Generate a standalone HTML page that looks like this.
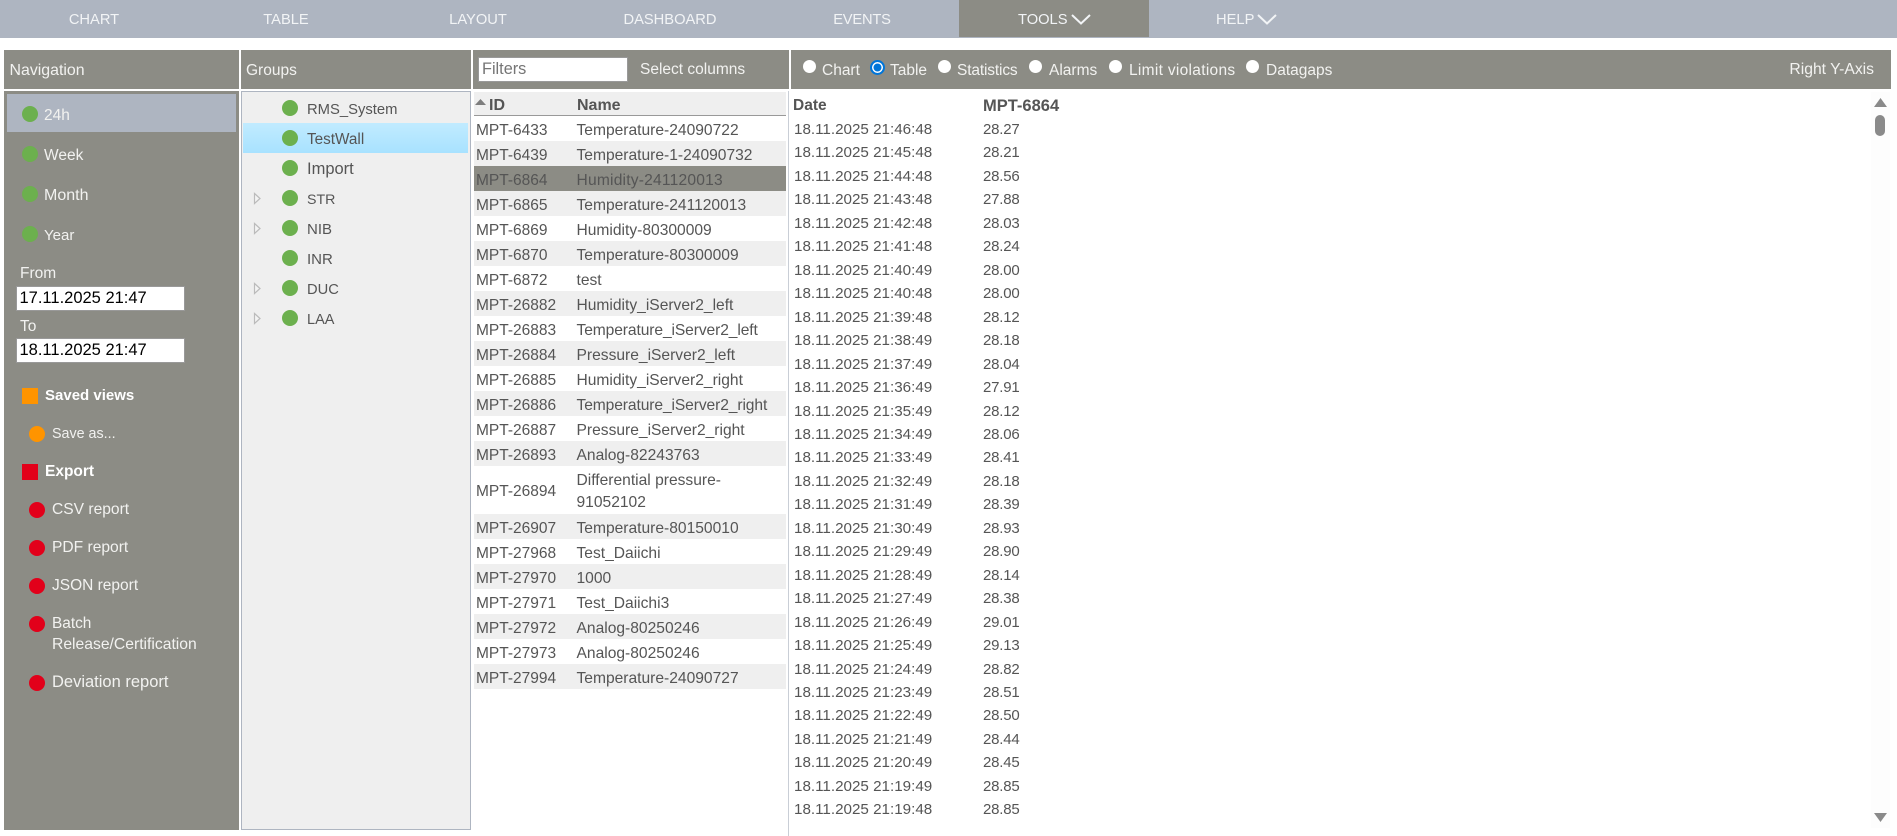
<!DOCTYPE html>
<html><head><meta charset="utf-8"><title>Table</title>
<style>
html,body{margin:0;padding:0;background:#fff}
#p{position:relative;width:1897px;height:836px;overflow:hidden;background:#fff;font-family:"Liberation Sans",sans-serif;font-size:15.5px;color:#555}
#p div,#p svg{position:absolute}
.b{background:#8c8c85}
.t{line-height:20px;white-space:nowrap;margin-top:1px}
.w{color:#f2f2f0}
.n{color:#f2f4f6;top:9px;width:160px;text-align:center;font-size:14.7px}
.d{width:16px;height:16px;border-radius:50%}
.g{background:#6cb04e}.r{background:#e2001a}.o{background:#ff9400}
.s{width:16px;height:16px}
.i{background:#fff;box-sizing:border-box;border:1px solid #999;color:#000;font-size:16.5px;line-height:22px;padding-left:3px;left:16px;width:169px;height:25px}
.row{left:474px;width:312px;height:25px}
.id{left:476px;margin-top:2px}.nm{left:576.5px;margin-top:2px;font-size:15.6px}
.dt{left:794px;font-size:15.2px}
.vl{left:983px;font-size:15px;letter-spacing:-.2px}
.rd{width:13px;height:13px;border-radius:50%;background:#fff;top:60px}
.rl{top:59px;color:#f2f2f0;font-size:15.5px;margin-top:2px}
</style></head><body><div id="p">

<div style="left:0;top:0;width:1897px;height:38px;background:#aeb5c1"></div>
<div style="left:959px;top:0;width:190px;height:37px;background:#8c8c85"></div>
<div class="t n" style="left:14px">CHART</div>
<div class="t n" style="left:206px">TABLE</div>
<div class="t n" style="left:398px">LAYOUT</div>
<div class="t n" style="left:590px">DASHBOARD</div>
<div class="t n" style="left:782px;letter-spacing:-.2px">EVENTS</div>
<div class="t n" style="left:1018px;width:48px">TOOLS</div>
<svg style="left:1071px;top:14px" width="20" height="11" viewBox="0 0 20 11"><polyline points="1,1 10,9.5 19,1" fill="none" stroke="#f2f4f6" stroke-width="2"/></svg>
<div class="t n" style="left:1216px;width:48px;text-align:left">HELP</div>
<svg style="left:1257px;top:14px" width="20" height="11" viewBox="0 0 20 11"><polyline points="1,1 10,9.5 19,1" fill="none" stroke="#f2f4f6" stroke-width="2"/></svg>

<div class="b" style="left:4px;top:50px;width:235px;height:39px"></div>
<div class="b" style="left:241px;top:50px;width:230px;height:39px"></div>
<div class="b" style="left:473px;top:50px;width:316px;height:39px"></div>
<div class="b" style="left:791px;top:50px;width:1100px;height:39px"></div>
<div class="t w" style="left:9.5px;top:60px;font-size:15.9px">Navigation</div>
<div class="t w" style="left:246px;top:60px">Groups</div>

<div class="b" style="left:4px;top:91px;width:235px;height:739px"></div>
<div style="left:7px;top:94px;width:229px;height:38px;background:#aeb5c1"></div>
<div class="d g" style="left:22px;top:106px"></div><div class="t w" style="left:44px;top:105px">24h</div>
<div class="d g" style="left:22px;top:146px"></div><div class="t w" style="left:44px;top:145px">Week</div>
<div class="d g" style="left:22px;top:186px"></div><div class="t w" style="left:44px;top:185px;font-size:16px">Month</div>
<div class="d g" style="left:22px;top:226px"></div><div class="t w" style="left:44px;top:225px;font-size:15px">Year</div>
<div class="t w" style="left:20px;top:263px">From</div>
<div class="i" style="top:286px;left:15.5px">17.11.2025 21:47</div>
<div class="t w" style="left:20px;top:316px">To</div>
<div class="i" style="top:338px;left:15.5px">18.11.2025 21:47</div>
<div class="s o" style="left:22px;top:388px"></div><div class="t" style="left:45px;top:385px;color:#fff;font-weight:bold;font-size:15px">Saved views</div>
<div class="d o" style="left:29px;top:426px"></div><div class="t w" style="left:52px;top:423px;font-size:14.3px">Save as...</div>
<div class="s r" style="left:22px;top:464px"></div><div class="t" style="left:45px;top:461px;color:#fff;font-weight:bold;font-size:15.5px">Export</div>
<div class="d r" style="left:29px;top:502px"></div><div class="t w" style="left:52px;top:499px;font-size:15.6px">CSV report</div>
<div class="d r" style="left:29px;top:540px"></div><div class="t w" style="left:52px;top:537px;font-size:15.6px">PDF report</div>
<div class="d r" style="left:29px;top:578px"></div><div class="t w" style="left:52px;top:575px;font-size:15.5px">JSON report</div>
<div class="d r" style="left:29px;top:616px"></div><div class="t w" style="left:52px;top:613px;font-size:15.4px">Batch</div><div class="t w" style="left:52px;top:634px;font-size:15.7px">Release/Certification</div>
<div class="d r" style="left:29px;top:675px"></div><div class="t w" style="left:52px;top:671px;font-size:16.5px">Deviation report</div>

<div style="left:241px;top:91px;width:230px;height:739px;box-sizing:border-box;border:1px solid #aeb5c1;background:#efefef"></div>
<div style="left:243px;top:123px;width:225px;height:30px;background:linear-gradient(#c1ebff,#a8e2ff)"></div>
<div class="d g" style="left:282px;top:100px"></div><div class="t" style="left:307px;top:99px;font-size:14.8px">RMS_System</div>
<div class="d g" style="left:282px;top:130px"></div><div class="t" style="left:307px;top:129px;font-size:15.3px">TestWall</div>
<div class="d g" style="left:282px;top:160px"></div><div class="t" style="left:307px;top:158px;font-size:16.5px">Import</div>
<div class="d g" style="left:282px;top:190px"></div><div class="t" style="left:307px;top:189px;font-size:14.2px">STR</div>
<div class="d g" style="left:282px;top:220px"></div><div class="t" style="left:307px;top:219px;font-size:15px">NIB</div>
<div class="d g" style="left:282px;top:250px"></div><div class="t" style="left:307px;top:249px;font-size:15px">INR</div>
<div class="d g" style="left:282px;top:280px"></div><div class="t" style="left:307px;top:279px;font-size:14.7px">DUC</div>
<div class="d g" style="left:282px;top:310px"></div><div class="t" style="left:307px;top:309px;font-size:14.5px">LAA</div>
<svg style="left:253px;top:192px" width="9" height="13" viewBox="0 0 9 13"><path d="M1.5 1.5 L7 6.5 L1.5 11.5 Z" fill="#f4f4f4" stroke="#bbb" stroke-width="1.2"/></svg>
<svg style="left:253px;top:222px" width="9" height="13" viewBox="0 0 9 13"><path d="M1.5 1.5 L7 6.5 L1.5 11.5 Z" fill="#f4f4f4" stroke="#bbb" stroke-width="1.2"/></svg>
<svg style="left:253px;top:282px" width="9" height="13" viewBox="0 0 9 13"><path d="M1.5 1.5 L7 6.5 L1.5 11.5 Z" fill="#f4f4f4" stroke="#bbb" stroke-width="1.2"/></svg>
<svg style="left:253px;top:312px" width="9" height="13" viewBox="0 0 9 13"><path d="M1.5 1.5 L7 6.5 L1.5 11.5 Z" fill="#f4f4f4" stroke="#bbb" stroke-width="1.2"/></svg>

<div style="left:478px;top:57px;width:150px;height:25px;box-sizing:border-box;border:1px solid #999;background:#fff;color:#757575;font-size:16.3px;line-height:22px;padding-left:3px">Filters</div>
<div class="t w" style="left:640px;top:59px">Select columns</div>
<div class="rd" style="left:803px"></div><div class="t rl" style="left:822px">Chart</div>
<div class="rd" style="left:870px;width:15px;height:15px;box-sizing:border-box;background:#0075d9;border:2px solid #0075d9;box-shadow:inset 0 0 0 1.5px #fff"></div><div class="t rl" style="left:890px">Table</div>
<div class="rd" style="left:938px"></div><div class="t rl" style="left:957px;letter-spacing:-.15px">Statistics</div>
<div class="rd" style="left:1029px"></div><div class="t rl" style="left:1049px">Alarms</div>
<div class="rd" style="left:1109px"></div><div class="t rl" style="left:1129px;letter-spacing:.3px">Limit violations</div>
<div class="rd" style="left:1246px"></div><div class="t rl" style="left:1266px">Datagaps</div>
<div class="t w" style="right:23px;top:59px;font-size:15.7px">Right Y-Axis</div>

<div style="left:474px;top:92px;width:312px;height:23px;background:#efefef;border-bottom:1px solid #999"></div>
<svg style="left:474px;top:98px" width="13" height="8" viewBox="0 0 13 8"><path d="M1 7 L6.5 1 L12 7 Z" fill="#7d7d7d"/></svg>
<div class="t" style="left:489px;top:95px;font-weight:bold;font-size:16px">ID</div>
<div class="t" style="left:577px;top:95px;font-weight:bold;font-size:16px">Name</div>

<div class="row" style="top:141px;background:#efefef"></div>
<div class="row" style="top:166px;background:#8c8c85"></div>
<div class="row" style="top:191px;background:#efefef"></div>
<div class="row" style="top:241px;background:#efefef"></div>
<div class="row" style="top:291px;background:#efefef"></div>
<div class="row" style="top:341px;background:#efefef"></div>
<div class="row" style="top:391px;background:#efefef"></div>
<div class="row" style="top:441px;background:#efefef"></div>
<div class="row" style="top:514px;background:#efefef"></div>
<div class="row" style="top:564px;background:#efefef"></div>
<div class="row" style="top:614px;background:#efefef"></div>
<div class="row" style="top:664px;background:#efefef"></div>

<div class="t id" style="top:119px">MPT-6433</div><div class="t nm" style="top:119px">Temperature-24090722</div>
<div class="t id" style="top:144px">MPT-6439</div><div class="t nm" style="top:144px">Temperature-1-24090732</div>
<div class="t id" style="top:169px">MPT-6864</div><div class="t nm" style="top:169px;letter-spacing:.2px">Humidity-241120013</div>
<div class="t id" style="top:194px">MPT-6865</div><div class="t nm" style="top:194px">Temperature-241120013</div>
<div class="t id" style="top:219px">MPT-6869</div><div class="t nm" style="top:219px">Humidity-80300009</div>
<div class="t id" style="top:244px">MPT-6870</div><div class="t nm" style="top:244px">Temperature-80300009</div>
<div class="t id" style="top:269px">MPT-6872</div><div class="t nm" style="top:269px">test</div>
<div class="t id" style="top:294px">MPT-26882</div><div class="t nm" style="top:294px">Humidity_iServer2_left</div>
<div class="t id" style="top:319px">MPT-26883</div><div class="t nm" style="top:319px;letter-spacing:-.1px">Temperature_iServer2_left</div>
<div class="t id" style="top:344px">MPT-26884</div><div class="t nm" style="top:344px">Pressure_iServer2_left</div>
<div class="t id" style="top:369px">MPT-26885</div><div class="t nm" style="top:369px">Humidity_iServer2_right</div>
<div class="t id" style="top:394px">MPT-26886</div><div class="t nm" style="top:394px;letter-spacing:-.1px">Temperature_iServer2_right</div>
<div class="t id" style="top:419px">MPT-26887</div><div class="t nm" style="top:419px">Pressure_iServer2_right</div>
<div class="t id" style="top:444px">MPT-26893</div><div class="t nm" style="top:444px">Analog-82243763</div>
<div class="t id" style="top:480px">MPT-26894</div><div class="t nm" style="top:469px">Differential pressure-</div><div class="t nm" style="top:491px">91052102</div>
<div class="t id" style="top:517px">MPT-26907</div><div class="t nm" style="top:517px">Temperature-80150010</div>
<div class="t id" style="top:542px">MPT-27968</div><div class="t nm" style="top:542px">Test_Daiichi</div>
<div class="t id" style="top:567px">MPT-27970</div><div class="t nm" style="top:567px">1000</div>
<div class="t id" style="top:592px">MPT-27971</div><div class="t nm" style="top:592px">Test_Daiichi3</div>
<div class="t id" style="top:617px">MPT-27972</div><div class="t nm" style="top:617px">Analog-80250246</div>
<div class="t id" style="top:642px">MPT-27973</div><div class="t nm" style="top:642px">Analog-80250246</div>
<div class="t id" style="top:667px">MPT-27994</div><div class="t nm" style="top:667px">Temperature-24090727</div>

<div style="left:788px;top:91px;width:1px;height:745px;background:#c9ced6"></div>

<div class="t" style="left:793px;top:95px;font-weight:bold;font-size:15.5px">Date</div>
<div class="t" style="left:983px;top:95px;font-weight:bold;font-size:16.5px">MPT-6864</div>

<div class="t dt" style="top:119px">18.11.2025 21:46:48</div><div class="t vl" style="top:119px">28.27</div>
<div class="t dt" style="top:142px">18.11.2025 21:45:48</div><div class="t vl" style="top:142px">28.21</div>
<div class="t dt" style="top:166px">18.11.2025 21:44:48</div><div class="t vl" style="top:166px">28.56</div>
<div class="t dt" style="top:189px">18.11.2025 21:43:48</div><div class="t vl" style="top:189px">27.88</div>
<div class="t dt" style="top:213px">18.11.2025 21:42:48</div><div class="t vl" style="top:213px">28.03</div>
<div class="t dt" style="top:236px">18.11.2025 21:41:48</div><div class="t vl" style="top:236px">28.24</div>
<div class="t dt" style="top:260px">18.11.2025 21:40:49</div><div class="t vl" style="top:260px">28.00</div>
<div class="t dt" style="top:283px">18.11.2025 21:40:48</div><div class="t vl" style="top:283px">28.00</div>
<div class="t dt" style="top:307px">18.11.2025 21:39:48</div><div class="t vl" style="top:307px">28.12</div>
<div class="t dt" style="top:330px">18.11.2025 21:38:49</div><div class="t vl" style="top:330px">28.18</div>
<div class="t dt" style="top:354px">18.11.2025 21:37:49</div><div class="t vl" style="top:354px">28.04</div>
<div class="t dt" style="top:377px">18.11.2025 21:36:49</div><div class="t vl" style="top:377px">27.91</div>
<div class="t dt" style="top:401px">18.11.2025 21:35:49</div><div class="t vl" style="top:401px">28.12</div>
<div class="t dt" style="top:424px">18.11.2025 21:34:49</div><div class="t vl" style="top:424px">28.06</div>
<div class="t dt" style="top:447px">18.11.2025 21:33:49</div><div class="t vl" style="top:447px">28.41</div>
<div class="t dt" style="top:471px">18.11.2025 21:32:49</div><div class="t vl" style="top:471px">28.18</div>
<div class="t dt" style="top:494px">18.11.2025 21:31:49</div><div class="t vl" style="top:494px">28.39</div>
<div class="t dt" style="top:518px">18.11.2025 21:30:49</div><div class="t vl" style="top:518px">28.93</div>
<div class="t dt" style="top:541px">18.11.2025 21:29:49</div><div class="t vl" style="top:541px">28.90</div>
<div class="t dt" style="top:565px">18.11.2025 21:28:49</div><div class="t vl" style="top:565px">28.14</div>
<div class="t dt" style="top:588px">18.11.2025 21:27:49</div><div class="t vl" style="top:588px">28.38</div>
<div class="t dt" style="top:612px">18.11.2025 21:26:49</div><div class="t vl" style="top:612px">29.01</div>
<div class="t dt" style="top:635px">18.11.2025 21:25:49</div><div class="t vl" style="top:635px">29.13</div>
<div class="t dt" style="top:659px">18.11.2025 21:24:49</div><div class="t vl" style="top:659px">28.82</div>
<div class="t dt" style="top:682px">18.11.2025 21:23:49</div><div class="t vl" style="top:682px">28.51</div>
<div class="t dt" style="top:705px">18.11.2025 21:22:49</div><div class="t vl" style="top:705px">28.50</div>
<div class="t dt" style="top:729px">18.11.2025 21:21:49</div><div class="t vl" style="top:729px">28.44</div>
<div class="t dt" style="top:752px">18.11.2025 21:20:49</div><div class="t vl" style="top:752px">28.45</div>
<div class="t dt" style="top:776px">18.11.2025 21:19:49</div><div class="t vl" style="top:776px">28.85</div>
<div class="t dt" style="top:799px">18.11.2025 21:19:48</div><div class="t vl" style="top:799px">28.85</div>

<div style="left:1871px;top:92px;width:19px;height:736px;background:#fdfdfd"></div>
<svg style="left:1874px;top:98px" width="13" height="9" viewBox="0 0 13 9"><path d="M0 9 L6.5 0 L13 9 Z" fill="#8a8a8a"/></svg>
<div style="left:1875px;top:115px;width:10px;height:21px;border-radius:5px;background:#8a8a8a"></div>
<svg style="left:1874px;top:813px" width="13" height="9" viewBox="0 0 13 9"><path d="M0 0 L13 0 L6.5 9 Z" fill="#8a8a8a"/></svg>
</div></body></html>
